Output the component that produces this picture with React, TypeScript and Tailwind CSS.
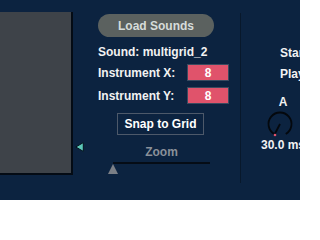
import React from "react";

function Knob() {
  return (
    <svg width="30" height="30" viewBox="0 0 30 30" className="mr-[6px]">
      <path d="M 9.25 24.96 A 11.5 11.5 0 1 1 20.75 24.96" fill="none" stroke="#04080d" strokeWidth="1.8" />
      <line x1="15" y1="15" x2="9.8" y2="25" stroke="#04080d" strokeWidth="1.8" />
      <circle cx="10" cy="26" r="1.3" fill="#e0536b" />
    </svg>
  );
}

export default function App() {
  return (
    <div className="w-[300px] h-[200px] bg-[#0c2340] flex overflow-hidden font-['Liberation_Sans',Arial,sans-serif] font-bold text-[12px] leading-[14px] text-[#f2f2f2]">
      <div className="flex items-start shrink-0">
        <div className="mt-[12px] w-[73px] h-[163px] bg-[#3e4349] border-r-2 border-b-2 border-[#040b14]" />
        <svg width="9" height="10" viewBox="0 0 9 10" className="mt-[142px] ml-[2px]">
          <polygon points="0.8,5 8.3,0.6 8.3,9.4" fill="#5cc7b8" stroke="#04101c" strokeWidth="1" />
        </svg>
      </div>

      <div className="ml-[14px] w-[131px] shrink-0 flex flex-col">
        <div className="mt-[14px] w-[116px] h-[23px] rounded-full bg-[#5b615f] text-[#d6dcda] flex items-center justify-center">
          Load Sounds
        </div>
        <div className="mt-[8px] whitespace-nowrap">Sound: multigrid_2</div>
        <div className="mt-[5px] h-[17px] flex items-center justify-between">
          <span>Instrument X:</span>
          <div className="w-[42px] h-[17px] bg-[#e0536b] border border-[#3b4a5f] flex items-center justify-center text-white">8</div>
        </div>
        <div className="mt-[6px] h-[17px] flex items-center justify-between">
          <span>Instrument Y:</span>
          <div className="w-[42px] h-[17px] bg-[#e0536b] border border-[#3b4a5f] flex items-center justify-center text-white">8</div>
        </div>
        <div className="mt-[9px] ml-[19px] w-[87px] h-[22px] border border-[#4d596a] flex items-center justify-center text-white">
          Snap to Grid
        </div>
        <div className="mt-[10px] ml-[15px] w-[97px] flex flex-col">
          <div className="text-center text-[#8a9099]">Zoom</div>
          <div className="mt-[3px] h-[2px] bg-[#050c16]" />
          <svg width="10" height="10" viewBox="0 0 10 10" className="-ml-[5px]">
            <polygon points="5,0 10,10 0,10" fill="#7b7f86" />
          </svg>
        </div>
      </div>

      <div className="ml-[11px] mt-[13px] w-px h-[170px] bg-[#08182b] shrink-0" />

      <div className="ml-[20px] flex flex-col shrink-0">
        <div className="mt-[46px] pl-[19px] whitespace-nowrap">Start</div>
        <div className="mt-[7px] pl-[19px] whitespace-nowrap">Play</div>
        <div className="mt-[14px] w-[44px] flex flex-col items-center">
          <div>A</div>
          <Knob />
          <div className="-mt-[1px] self-start whitespace-nowrap">30.0 ms</div>
        </div>
      </div>
    </div>
  );
}
